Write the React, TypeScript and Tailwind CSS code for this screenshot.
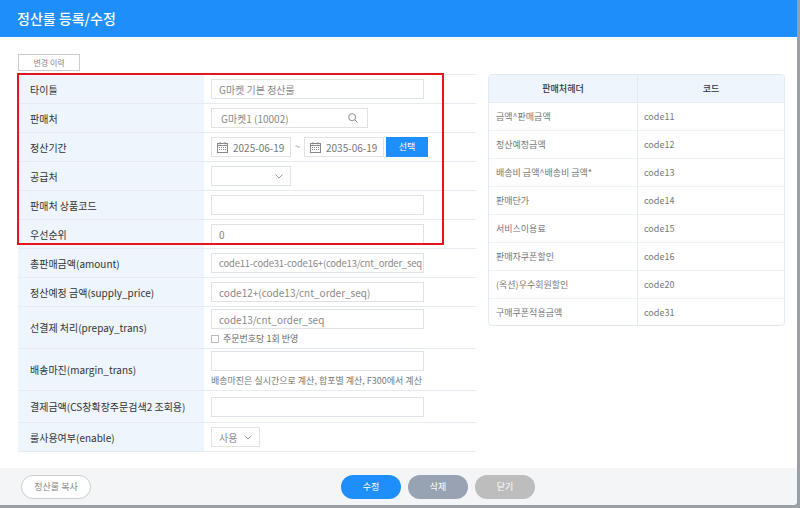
import React from "react";

const F = { fontFamily: '"Noto Sans CJK KR","Noto Sans",sans-serif' };

function Cal() {
  return (
    <svg width="11" height="11" viewBox="0 0 11 11" className="shrink-0">
      <rect x="0.5" y="1.5" width="10" height="9" fill="none" stroke="#888" />
      <line x1="0.5" y1="3.5" x2="10.5" y2="3.5" stroke="#888" />
      <line x1="3" y1="0" x2="3" y2="2.5" stroke="#888" />
      <line x1="8" y1="0" x2="8" y2="2.5" stroke="#888" />
      {[2.5, 4.5, 6.5, 8.5].map((x) => [5.5, 7.5].map((y) => <rect key={x + "-" + y} x={x - 0.5} y={y - 0.5} width="1" height="1" fill="#888" />))}
    </svg>
  );
}
function Chev() {
  return (
    <svg width="8" height="5" viewBox="0 0 8 5"><path d="M0.5 0.5 L4 4 L7.5 0.5" fill="none" stroke="#999" /></svg>
  );
}

const Input = ({ v, small }: { v?: string; small?: boolean }) => (
  <div className={`w-[213px] h-[20px] border border-[#dfe3e8] bg-white flex items-center px-[7px] ${small ? "text-[9.5px] tracking-[-0.2px]" : "text-[10px]"} text-[#888] overflow-hidden whitespace-nowrap`}>{v}</div>
);

function Row({ label, h = "h-[29px]", children }: { label: string; h?: string; children?: React.ReactNode }) {
  return (
    <div className={`flex ${h} border-b border-[#e6ebf2]`}>
      <div className="w-[186px] shrink-0 bg-[#eef5fd] flex items-center pl-[12px] text-[10px] text-[#333]">{label}</div>
      <div className="flex-1 flex flex-col justify-center pl-[7px]">{children}</div>
    </div>
  );
}

const codes: [string, string][] = [
  ["금액^판매금액", "code11"],
  ["정산예정금액", "code12"],
  ["배송비 금액^배송비 금액*", "code13"],
  ["판매단가", "code14"],
  ["서비스이용료", "code15"],
  ["판매자쿠폰할인", "code16"],
  ["(옥션)우수회원할인", "code20"],
  ["구매쿠폰적용금액", "code31"],
];

export default function App() {
  return (
    <div style={F} className="w-[800px] h-[508px] bg-[#9aa0a6] relative overflow-hidden">
      <div className="w-[797px] h-[505px] bg-white flex flex-col rounded-br-[4px] overflow-hidden">
        <div className="h-[37px] bg-[#1e8ffa] flex items-center pl-[17px] text-white text-[14px] font-medium shrink-0">정산룰 등록/수정</div>
        <div className="flex-1 relative px-[18px] pt-[17px]">
          <div className="w-[62px] h-[17px] border border-[#ccc] text-[8px] text-[#888] flex items-center justify-center">변경 이력</div>
          <div className="flex mt-[3px]">
            <div className="w-[458px] shrink-0 border-t border-[#e6ebf2] relative">
              <Row label="타이틀"><Input v="G마켓 기본 정산룰" /></Row>
              <Row label="판매처">
                <div className="w-[157px] h-[20px] border border-[#dfe3e8] flex items-center justify-between px-[9px] text-[10px] text-[#888]">
                  G마켓1 (10002)
                  <svg width="10" height="10" viewBox="0 0 10 10"><circle cx="4.2" cy="4.2" r="3.5" fill="none" stroke="#888" /><line x1="6.8" y1="6.8" x2="9.5" y2="9.5" stroke="#888" /></svg>
                </div>
              </Row>
              <Row label="정산기간">
                <div className="flex items-center h-[20px]">
                  <div className="w-[80px] h-[20px] border border-[#dfe3e8] flex items-center gap-[5px] px-[5px] text-[10px] text-[#777]"><Cal />2025-06-19</div>
                  <div className="w-[13px] text-center text-[9px] text-[#888]">~</div>
                  <div className="w-[80px] h-[20px] border border-[#dfe3e8] flex items-center gap-[5px] px-[5px] text-[10px] text-[#777]"><Cal />2035-06-19</div>
                  <div className="ml-[2px] w-[42px] h-[20px] bg-[#1e8ffa] text-white text-[9px] flex items-center justify-center">선택</div>
                </div>
              </Row>
              <Row label="공급처">
                <div className="w-[80px] h-[20px] border border-[#dfe3e8] flex items-center justify-end pr-[7px]"><Chev /></div>
              </Row>
              <Row label="판매처 상품코드"><Input /></Row>
              <Row label="우선순위"><Input v="0" /></Row>
              <Row label="총판매금액(amount)"><Input small v="code11-code31-code16+(code13/cnt_order_seq" /></Row>
              <Row label="정산예정 금액(supply_price)"><Input v="code12+(code13/cnt_order_seq)" /></Row>
              <Row label="선결제 처리(prepay_trans)" h="h-[42px]">
                <Input v="code13/cnt_order_seq" />
                <div className="flex items-center gap-[4px] mt-[3px] text-[9px] text-[#666]">
                  <div className="w-[8px] h-[8px] border border-[#bbb]" />주문번호당 1회 반영
                </div>
              </Row>
              <Row label="배송마진(margin_trans)" h="h-[42px]">
                <Input />
                <div className="mt-[3px] text-[9px] text-[#777]">배송마진은 실시간으로 계산, 합포별 계산, F300에서 계산</div>
              </Row>
              <Row label="결제금액(CS창확장주문검색2 조회용)" h="h-[32px]"><Input /></Row>
              <Row label="룰사용여부(enable)">
                <div className="w-[49px] h-[20px] border border-[#dfe3e8] flex items-center justify-between px-[7px] text-[10px] text-[#888]">사용<Chev /></div>
              </Row>
              <div className="absolute left-[-1px] top-[-2px] w-[427px] h-[172px] border-2 border-[#e8141c] pointer-events-none" />
            </div>
            <div className="ml-[12px] w-[297px] shrink-0 h-[252px] border border-[#e3e9f0] rounded-[4px] overflow-hidden text-[9px]">
              <div className="flex h-[28px] bg-[#eef5fd] border-b border-[#e6ebf2] text-[#333] font-medium">
                <div className="w-[149px] border-r border-[#e6ebf2] flex items-center justify-center">판매처헤더</div>
                <div className="flex-1 flex items-center justify-center">코드</div>
              </div>
              {codes.map(([a, b], i) => (
                <div key={b} className={`flex h-[28px] text-[#777] ${i < 7 ? "border-b border-[#eef1f5]" : ""}`}>
                  <div className="w-[149px] border-r border-[#e6ebf2] flex items-center pl-[7px]">{a}</div>
                  <div className="flex-1 flex items-center pl-[6px]">{b}</div>
                </div>
              ))}
            </div>
          </div>
        </div>
        <div className="h-[37px] bg-[#f4f5f7] flex items-center px-[21px] shrink-0">
          <div className="w-[70px] h-[24px] rounded-full border border-[#ccc] bg-white text-[9px] text-[#888] flex items-center justify-center">정산룰 복사</div>
          <div className="flex gap-[7px] ml-[250px]">
            <div className="w-[60px] h-[24px] rounded-full bg-[#1e8ffa] text-white text-[9px] flex items-center justify-center">수정</div>
            <div className="w-[60px] h-[24px] rounded-full bg-[#98a2b3] text-white text-[9px] flex items-center justify-center">삭제</div>
            <div className="w-[60px] h-[24px] rounded-full bg-[#bdbdbd] text-white text-[9px] flex items-center justify-center">닫기</div>
          </div>
        </div>
      </div>
    </div>
  );
}
